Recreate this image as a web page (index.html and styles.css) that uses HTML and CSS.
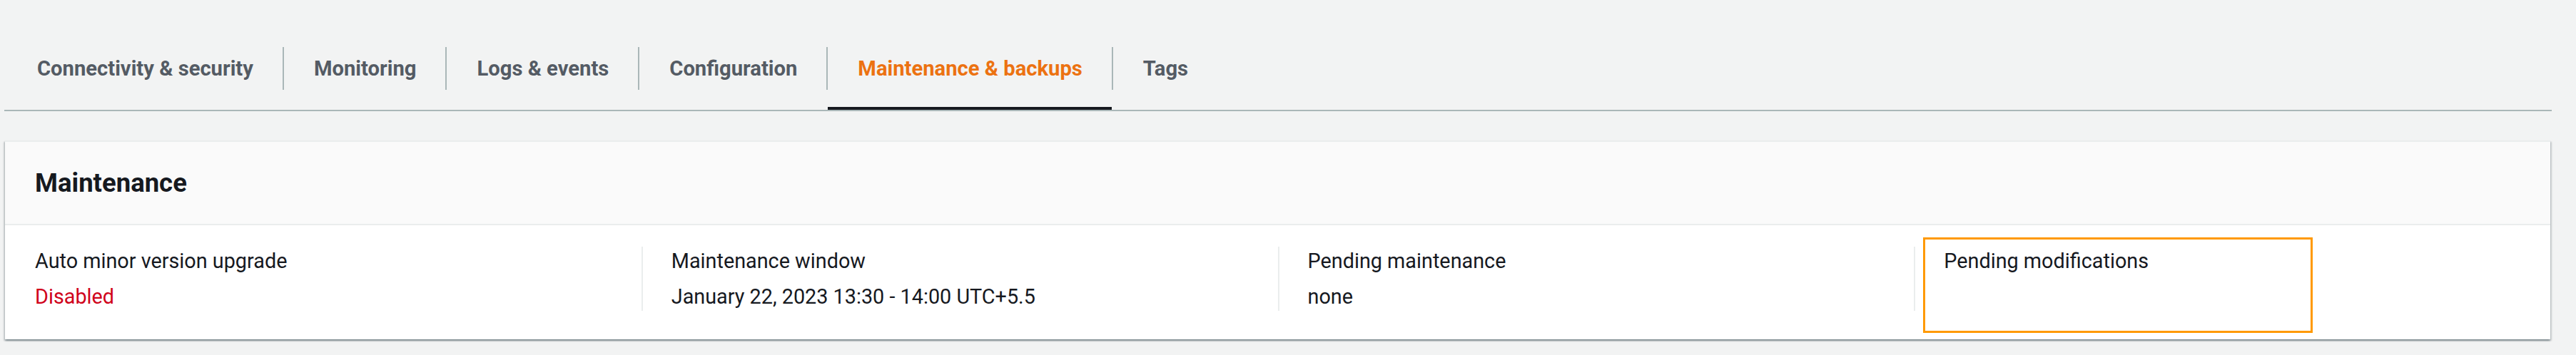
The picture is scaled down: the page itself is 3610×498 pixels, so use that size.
FILE: index.html
```html
<!DOCTYPE html>
<html lang="en">
<head>
<meta charset="utf-8">
<title>Maintenance &amp; backups</title>
<link rel="stylesheet" href="styles.css">
</head>
<body>
<div class="page">
  <div class="tabs" role="tablist">
    <button class="tab" role="tab"><span class="tab-label">Connectivity &amp; security</span></button>
    <button class="tab" role="tab"><span class="tab-label">Monitoring</span></button>
    <button class="tab" role="tab"><span class="tab-label">Logs &amp; events</span></button>
    <button class="tab" role="tab"><span class="tab-label">Configuration</span></button>
    <button class="tab tab-active" role="tab" aria-selected="true"><span class="tab-label">Maintenance &amp; backups</span></button>
    <button class="tab" role="tab"><span class="tab-label">Tags</span></button>
  </div>
  <section class="panel">
    <header class="panel-header"><h2 class="panel-title">Maintenance</h2></header>
    <div class="panel-body">
      <div class="col">
        <div class="label">Auto minor version upgrade</div>
        <div class="value value-error">Disabled</div>
      </div>
      <div class="col">
        <div class="label">Maintenance window</div>
        <div class="value">January 22, 2023 13:30 - 14:00 UTC+5.5</div>
      </div>
      <div class="col">
        <div class="label">Pending maintenance</div>
        <div class="value">none</div>
      </div>
      <div class="col col-highlight">
        <div class="label">Pending modifications</div>
        <div class="value"></div>
        <span class="highlight-box"></span>
      </div>
    </div>
  </section>
</div>
</body>
</html>
```
FILE: styles.css
```css
* { box-sizing: border-box; }
html, body { margin: 0; background: #f2f3f3; }
body {
  font-family: Roboto, "Open Sans", sans-serif;
  color: #16191f;
  width: 3610px;
  height: 498px;
  overflow: hidden;
}
.page { margin-left: 6px; width: 3570px; }

.tabs {
  display: flex;
  padding-left: 4px;
  border-bottom: 2px solid #aab7b8;
}
.tab {
  display: flex;
  align-items: flex-start;
  background: none;
  border: 0;
  margin: 0;
  padding: 0;
  font: inherit;
  cursor: pointer;
}
.tab + .tab::before {
  content: "";
  width: 2px;
  height: 60px;
  margin-top: 66px;
  background: #aab7b8;
}
.tab-label {
  display: block;
  padding: 66px 41px 24px 42px;
  line-height: 60px;
  font-size: 29.2px;
  font-weight: 700;
  color: #545b64;
  white-space: nowrap;
  border-bottom: 4px solid transparent;
}
.tab-active .tab-label { color: #ec7211; border-bottom-color: #16191f; }

.panel {
  margin: 41px 2px 0 1px;
  background: #fff;
  border-top: 2px solid #eaeded;
  box-shadow: 0 2px 2px rgba(0, 28, 36, 0.3), 2px 2px 2px rgba(0, 28, 36, 0.15), -2px 2px 2px rgba(0, 28, 36, 0.15);
}
.panel-header {
  height: 117px;
  padding-left: 42px;
  background: #fafafa;
  border-bottom: 2px solid #eaeded;
  display: flex;
  align-items: center;
}
.panel-title { margin: 0; font-size: 36.5px; font-weight: 700; line-height: 44px; }

.panel-body {
  display: grid;
  grid-template-columns: repeat(4, 1fr);
  padding: 30px 0 40px;
}
.col {
  position: relative;
  padding: 0 40px;
  border-left: 2px solid #eaeded;
  height: 90px;
  font-size: 28.8px;
  line-height: 40px;
}
.col:first-child { border-left-color: transparent; }
.value { margin-top: 10px; min-height: 40px; }
.value-error { color: #d0021b; }
.highlight-box {
  position: absolute;
  left: 11px;
  top: -13px;
  width: 546px;
  height: 134px;
  border: 3px solid #ff9900;
}
```
